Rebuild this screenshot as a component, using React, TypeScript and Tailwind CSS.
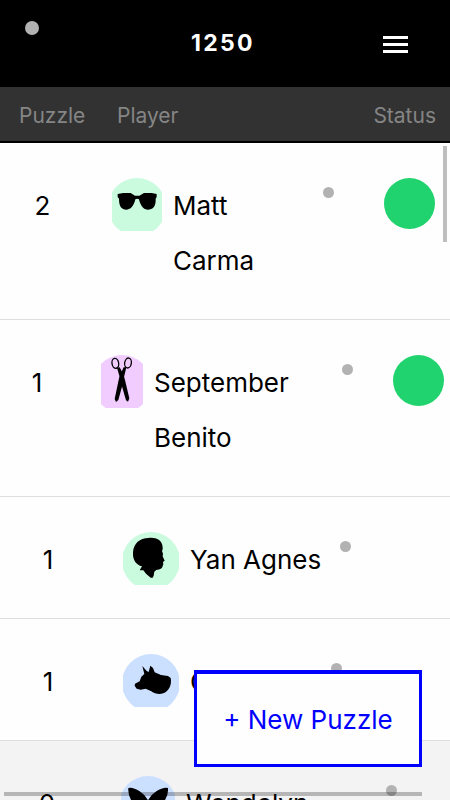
import type { ReactNode } from "react";

type Row = {
  puzzle: string;
  name: string[];
  icon: ReactNode;
  color: string;
  numberWidth: string;
  avatarWidth: string;
  statusWidth: string;
  statusPadding?: string;
  online?: boolean;
  active?: boolean;
};

const glasses = (
  <path d="M29 48 L46 45 H68 L81 53 H94 L108 45 H131 L146 48 V57 L143 62 C144 84 136 95 118 95 C105 94 97 82 93 64 Q87 60 82 64 C78 82 70 94 56 95 C39 94 33 84 33 62 L29 57 Z" />
);

const scissors = (
  <>
    <ellipse cx="67" cy="25" rx="10" ry="15" fill="none" stroke="black" strokeWidth="4" transform="rotate(-10 67 25)" />
    <ellipse cx="105" cy="24" rx="10" ry="15" fill="none" stroke="black" strokeWidth="4" transform="rotate(10 105 24)" />
    <path d="M72 38 L80 37 L89 54 L95 71 L109 130 L105 140 L99 136 L84 84 L79 62 Z" />
    <path d="M100 37 L92 37 L85 52 L78 70 L65 132 L69 141 L76 135 L90 84 L94 62 Z" />
  </>
);

const head = (
  <path d="M79 18 C108 15 124 29 122 52 L120 57 L123 65 L122 73 L128 86 L123 90 L124 97 L122 102 C120 114 107 112 103 114 L97 119 L95 131 L92 137 H86 L72 125 L64 115 L53 115 L60 103 C42 98 32 84 33 62 C34 34 54 18 79 18 Z" />
);

const dog = (
  <path d="M61 36 L74 51 L80 54 L85 35 L93 42 L98 55 L117 63 L138 66 L146 72 C149 86 145 102 134 112 C122 123 102 123 88 112 L71 104 L56 107 L44 104 L38 95 L39 89 L53 82 L58 68 L67 60 Z" />
);

const butterfly = (
  <path d="M28 36 Q42 33 62 46 Q78 56 87 73 Q96 56 112 46 Q132 33 147 36 Q149 58 133 80 L120 96 Q132 116 114 130 Q97 138 87 102 Q77 138 60 130 Q42 116 54 96 L41 80 Q26 58 28 36 Z" />
);

const rows: Row[] = [
  {
    puzzle: "2",
    name: ["Matt", "Carma"],
    icon: glasses,
    color: "bg-[#cafbdf]",
    numberWidth: "w-[85px]",
    avatarWidth: "w-[50px]",
    statusWidth: "w-[127px]",
    statusPadding: "pr-[15px]",
    online: true,
  },
  {
    puzzle: "1",
    name: ["September", "Benito"],
    icon: scissors,
    color: "bg-[#f0ccff]",
    numberWidth: "w-[74px]",
    avatarWidth: "w-[42px]",
    statusWidth: "w-[108px]",
    statusPadding: "pr-[6px]",
    online: true,
  },
  {
    puzzle: "1",
    name: ["Yan Agnes"],
    icon: head,
    color: "bg-[#cafbdf]",
    numberWidth: "w-[96px]",
    avatarWidth: "w-[56px]",
    statusWidth: "w-[110px]",
  },
  {
    puzzle: "1",
    name: ["Carla Elam"],
    icon: dog,
    color: "bg-[#cbdfff]",
    numberWidth: "w-[96px]",
    avatarWidth: "w-[56px]",
    statusWidth: "w-[119px]",
  },
  {
    puzzle: "0",
    name: ["Wendelyn"],
    icon: butterfly,
    color: "bg-[#cbdfff]",
    numberWidth: "w-[94px]",
    avatarWidth: "w-[54px]",
    statusWidth: "w-[64px]",
    active: true,
  },
];

function Avatar({ row }: { row: Row }) {
  return (
    <div className={`flex h-[53px] shrink-0 justify-center overflow-hidden ${row.avatarWidth}`}>
      <div className={`size-[58px] shrink-0 rounded-full ${row.color}`}>
        <svg viewBox="0 0 174 174" className="size-full" aria-hidden="true">
          {row.icon}
        </svg>
      </div>
    </div>
  );
}

function PlayerRow({ row }: { row: Row }) {
  return (
    <li
      className={`flex border-b border-[#dedede] pt-[35px] pb-[31px] ${row.active ? "bg-[#f3f3f3]" : "bg-[#fefefe]"}`}
    >
      <span className={`mr-[27px] shrink-0 text-center ${row.numberWidth}`}>{row.puzzle}</span>
      <Avatar row={row} />
      <div className="ml-[11px] min-w-0 flex-1 whitespace-nowrap">
        {row.name.map((part) => (
          <span key={part} className="block">
            {part}
          </span>
        ))}
      </div>
      <div className={`flex shrink-0 items-start justify-between ${row.statusWidth} ${row.statusPadding ?? ""}`}>
        <span className="mt-[9px] size-[11px] rounded-full bg-[#b2b2b2]" />
        {row.online && <span className="size-[51px] rounded-full bg-[#21d36f]" />}
      </div>
    </li>
  );
}

export default function App() {
  return (
    <div className="relative flex h-screen flex-col overflow-hidden bg-[#fefefe] font-['Inter',sans-serif] text-black">
      <header className="grid h-[87px] shrink-0 grid-cols-[1fr_auto_1fr] items-center bg-black pr-[25px] pl-[21px] text-white">
        <span className="mt-[21px] ml-1 size-[14px] self-start rounded-full bg-[#b2b2b2]" />
        <h1 className="text-[23px] font-bold tracking-widest">1250</h1>
        <button type="button" aria-label="Menu" className="mr-[17px] flex w-[25px] flex-col gap-1 justify-self-end pt-0.5">
          <span className="h-[3px] w-full bg-white" />
          <span className="h-[3px] w-full bg-white" />
          <span className="h-[3px] w-full bg-white" />
        </button>
      </header>

      <div className="flex h-14 shrink-0 items-center border-b-2 border-black bg-[#323232] pt-1 pr-[14px] pl-[19px] text-[21px] text-[#858585]">
        <span className="w-[98px]">Puzzle</span>
        <span className="flex-1">Player</span>
        <span>Status</span>
      </div>

      <main className="relative min-h-0 flex-1 overflow-hidden">
        <ul className="text-[26px] leading-[55px]">
          {rows.map((row) => (
            <PlayerRow key={row.name[0]} row={row} />
          ))}
        </ul>
        <span className="absolute top-[3px] right-[3px] h-24 w-1 bg-black/25" />
        <span className="absolute right-7 bottom-1 left-1 h-1 bg-black/25" />
        <button
          type="button"
          className="absolute right-7 bottom-[33px] h-[97px] w-[228px] border-3 border-t-4 border-[#0000ff] bg-[#fefefe] text-[26px] text-[#0000ff]"
        >
          + New Puzzle
        </button>
      </main>
    </div>
  );
}
